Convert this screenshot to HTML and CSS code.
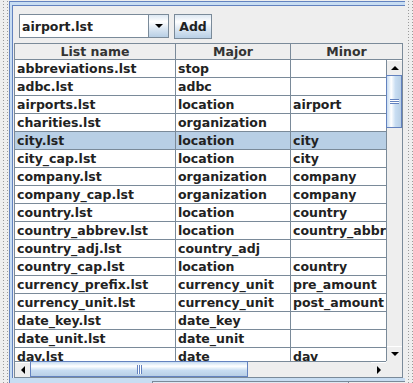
FILE: index.html
```html
<!DOCTYPE html>
<html lang="en">
<head>
    <meta charset="UTF-8">
    <title>Lists</title>
    <link rel="stylesheet" href="styles.css">
</head>
<body>
    <div class="dots"></div>

    <div class="frame">
        <div class="panel">
            <!-- List chooser -->
            <div class="toolbar">
                <div class="combo">
                    <span class="combo-value">airport.lst</span>
                    <span class="combo-button"><span class="arrow down"></span></span>
                </div>
                <button class="btn">Add</button>
            </div>

            <!-- Table of lists -->
            <div class="scrollpane">
                <div class="header">
                    <div class="cell c1">List name</div>
                    <div class="cell c2">Major</div>
                    <div class="cell c3">Minor</div>
                    <div class="cell c4"></div>
                </div>

                <div class="rows">
                    <div class="row"><div class="cell c1">abbreviations.lst</div><div class="cell c2">stop</div><div class="cell c3"></div></div>
                    <div class="row"><div class="cell c1">adbc.lst</div><div class="cell c2">adbc</div><div class="cell c3"></div></div>
                    <div class="row"><div class="cell c1">airports.lst</div><div class="cell c2">location</div><div class="cell c3">airport</div></div>
                    <div class="row"><div class="cell c1">charities.lst</div><div class="cell c2">organization</div><div class="cell c3"></div></div>
                    <div class="row selected"><div class="cell c1">city.lst</div><div class="cell c2">location</div><div class="cell c3">city</div></div>
                    <div class="row"><div class="cell c1">city_cap.lst</div><div class="cell c2">location</div><div class="cell c3">city</div></div>
                    <div class="row"><div class="cell c1">company.lst</div><div class="cell c2">organization</div><div class="cell c3">company</div></div>
                    <div class="row"><div class="cell c1">company_cap.lst</div><div class="cell c2">organization</div><div class="cell c3">company</div></div>
                    <div class="row"><div class="cell c1">country.lst</div><div class="cell c2">location</div><div class="cell c3">country</div></div>
                    <div class="row"><div class="cell c1">country_abbrev.lst</div><div class="cell c2">location</div><div class="cell c3">country_abbrev</div></div>
                    <div class="row"><div class="cell c1">country_adj.lst</div><div class="cell c2">country_adj</div><div class="cell c3"></div></div>
                    <div class="row"><div class="cell c1">country_cap.lst</div><div class="cell c2">location</div><div class="cell c3">country</div></div>
                    <div class="row"><div class="cell c1">currency_prefix.lst</div><div class="cell c2">currency_unit</div><div class="cell c3">pre_amount</div></div>
                    <div class="row"><div class="cell c1">currency_unit.lst</div><div class="cell c2">currency_unit</div><div class="cell c3">post_amount</div></div>
                    <div class="row"><div class="cell c1">date_key.lst</div><div class="cell c2">date_key</div><div class="cell c3"></div></div>
                    <div class="row"><div class="cell c1">date_unit.lst</div><div class="cell c2">date_unit</div><div class="cell c3"></div></div>
                    <div class="row"><div class="cell c1">day.lst</div><div class="cell c2">date</div><div class="cell c3">day</div></div>
                </div>

                <div class="vscroll">
                    <div class="sb-btn"><span class="arrow up"></span></div>
                    <div class="thumb v-thumb"><span class="grip"></span></div>
                    <div class="track"></div>
                    <div class="sb-btn"><span class="arrow down"></span></div>
                </div>

                <div class="hscroll">
                    <div class="sb-btn"><span class="arrow left"></span></div>
                    <div class="thumb h-thumb"><span class="grip"></span></div>
                    <div class="track"></div>
                    <div class="sb-btn"><span class="arrow right"></span></div>
                </div>

                <div class="corner"></div>
            </div>
        </div>

        <!-- Neighbouring window tabs -->
        <div class="dock">
            <span class="tab"></span>
            <span class="tab"></span>
        </div>
    </div>

    <div class="dots"></div>
</body>
</html>
```

FILE: styles.css
```css
/* Reset */
* {
    margin: 0;
    padding: 0;
    box-sizing: border-box;
}

body {
    width: 413px;
    height: 383px;
    overflow: hidden;
    display: flex;
    background-color: #eeeeee;
    font-family: 'DejaVu Sans', 'Liberation Sans', sans-serif;
    font-weight: bold;
    font-size: 12.5px;
    color: #222;
}

/* Split pane dividers */
.dots {
    width: 9px;
    background-color: #eeeeee;
    background-image: radial-gradient(circle at 1.5px 1.5px, #9a9a9a 0.8px, transparent 0.9px);
    background-size: 4px 3px;
    background-position: 2px 0;
}

.dots:last-child {
    width: 8px;
}

/* Window frame */
.frame {
    width: 396px;
    margin-top: 1px;
    display: flex;
    flex-direction: column;
    background-color: #c8ddf2;
    border-top: 1px solid #6382bf;
    border-left: 1px solid #6382bf;
    padding: 3px 0 0 2px;
}

.panel {
    background-color: #eeeeee;
    border-top: 1px solid #6382bf;
    border-left: 1px solid #6382bf;
    padding: 8px 2px 0 1px;
}

/* Toolbar */
.toolbar {
    display: flex;
    gap: 5px;
    height: 24px;
    margin: 0 0 5px 5px;
}

.combo {
    width: 150px;
    display: flex;
    background-color: #fff;
    border: 1px solid #7a8a99;
}

.combo-value {
    flex: 1;
    padding-left: 1px;
    line-height: 22px;
    border: 1px solid #fff;
}

.combo-button {
    width: 20px;
    display: flex;
    align-items: center;
    justify-content: center;
    background: linear-gradient(#dde8f3 0%, #ffffff 30%, #dde8f3 60%, #b8cfe5 100%);
    border-left: 1px solid #7a8a99;
}

.btn {
    width: 38px;
    height: 25px;
    font: inherit;
    color: #222;
    border: 1px solid #7a8a99;
    background: linear-gradient(#dde8f3 0%, #ffffff 30%, #dde8f3 60%, #b8cfe5 100%);
}

/* Arrows */
.arrow {
    width: 0;
    height: 0;
    border: 4px solid transparent;
}

.arrow.down {
    border-top-color: #000;
    border-bottom-width: 0;
}

.arrow.up {
    border-bottom-color: #000;
    border-top-width: 0;
}

.arrow.left {
    border-right-color: #000;
    border-left-width: 0;
}

.arrow.right {
    border-left-color: #000;
    border-right-width: 0;
}

/* Scroll pane */
.scrollpane {
    height: 335px;
    border: 1px solid #7a8a99;
    display: grid;
    grid-template-columns: 371px 16px;
    grid-template-rows: 16px 301px 16px;
    background-color: #eeeeee;
}

.header {
    grid-column: 1 / 3;
    display: flex;
    overflow: hidden;
    border-bottom: 1px solid #7a8a99;
    color: #333;
}

.header .cell {
    text-align: center;
    line-height: 15px;
    padding: 0;
}

.cell {
    flex-shrink: 0;
    border-right: 1px solid #7a8a99;
    white-space: nowrap;
    overflow: hidden;
    padding-left: 2px;
}

.c1 { width: 161px; }
.c2 { width: 115px; }
.c3 { width: 112px; }
.c4 { width: 200px; }

.rows {
    overflow: hidden;
    background-color: #fff;
}

.row {
    display: flex;
    height: 18px;
    line-height: 17px;
    border-bottom: 1px solid #7a8a99;
}

.row.selected {
    background-color: #b8cfe5;
}

/* Scroll bars */
.vscroll,
.hscroll {
    display: flex;
    background-color: #eeeeee;
}

.vscroll {
    flex-direction: column;
    border-left: 1px solid #7a8a99;
}

.hscroll {
    border-top: 1px solid #7a8a99;
}

.sb-btn {
    flex: 0 0 15px;
    display: flex;
    align-items: center;
    justify-content: center;
    background-color: #eeeeee;
    border-top: 1px solid #fff;
}

.track {
    flex: 1;
}

.thumb {
    display: flex;
    align-items: center;
    justify-content: center;
    border: 1px solid #6382bf;
}

.v-thumb {
    height: 53px;
    margin-left: -1px;
    background: linear-gradient(to right, #c8ddf2 0%, #ffffff 30%, #c8ddf2 60%, #b8cfe5 100%);
}

.v-thumb .grip {
    width: 9px;
    height: 5px;
    background: repeating-linear-gradient(#6382bf 0 1px, #fff 1px 2px);
}

.h-thumb {
    width: 218px;
    margin-top: -1px;
    background: linear-gradient(#c8ddf2 0%, #ffffff 30%, #c8ddf2 60%, #b8cfe5 100%);
}

.h-thumb .grip {
    width: 5px;
    height: 9px;
    background: repeating-linear-gradient(to right, #6382bf 0 1px, #fff 1px 2px);
}

.corner {
    background-color: #eeeeee;
}

/* Bottom tabs */
.dock {
    flex: 1;
    display: flex;
    padding: 3px 0 0 140px;
}

.tab {
    width: 196px;
    background-color: #dde8f3;
    border-top: 1px solid #7a8a99;
    border-left: 1px solid #7a8a99;
}

.tab + .tab {
    flex: 1;
    background-color: #eeeeee;
}
```
